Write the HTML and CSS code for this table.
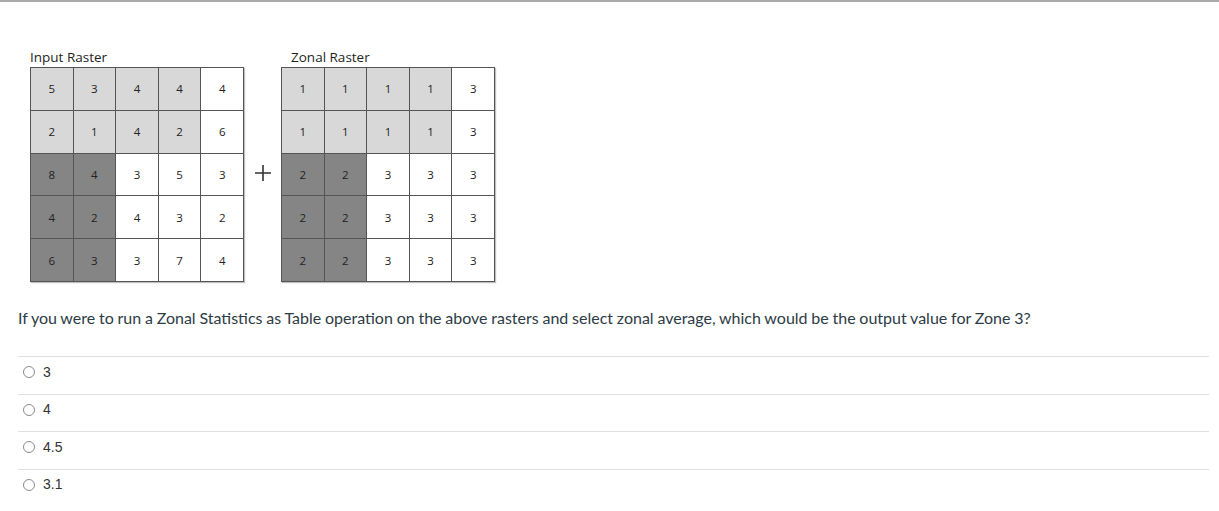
FILE: index.html
```html
<!DOCTYPE html>
<html>
<head>
<meta charset="utf-8">
<link rel="stylesheet" href="styles.css">
</head>
<body>
<div class="topline"></div>
<div class="figure">
  <div class="raster">
    <div class="label">Input Raster</div>
    <div class="grid">
      <div class="c l">5</div><div class="c l">3</div><div class="c l">4</div><div class="c l">4</div><div class="c">4</div>
      <div class="c l">2</div><div class="c l">1</div><div class="c l">4</div><div class="c l">2</div><div class="c">6</div>
      <div class="c d">8</div><div class="c d">4</div><div class="c">3</div><div class="c">5</div><div class="c">3</div>
      <div class="c d">4</div><div class="c d">2</div><div class="c">4</div><div class="c">3</div><div class="c">2</div>
      <div class="c d">6</div><div class="c d">3</div><div class="c">3</div><div class="c">7</div><div class="c">4</div>
    </div>
  </div>
  <div class="plus">
    <svg width="16" height="16" viewBox="0 0 16 16"><path d="M8 0V16M0 8H16" stroke="#333" stroke-width="1.6" fill="none"/></svg>
  </div>
  <div class="raster">
    <div class="label indent">Zonal Raster</div>
    <div class="grid">
      <div class="c l">1</div><div class="c l">1</div><div class="c l">1</div><div class="c l">1</div><div class="c">3</div>
      <div class="c l">1</div><div class="c l">1</div><div class="c l">1</div><div class="c l">1</div><div class="c">3</div>
      <div class="c d">2</div><div class="c d">2</div><div class="c">3</div><div class="c">3</div><div class="c">3</div>
      <div class="c d">2</div><div class="c d">2</div><div class="c">3</div><div class="c">3</div><div class="c">3</div>
      <div class="c d">2</div><div class="c d">2</div><div class="c">3</div><div class="c">3</div><div class="c">3</div>
    </div>
  </div>
</div>
<p class="question">If you were to run a Zonal Statistics as Table operation on the above rasters and select zonal average, which would be the output value for Zone 3?</p>
<div class="answers">
  <label class="answer"><span class="radio"></span><span class="atext">3</span></label>
  <label class="answer"><span class="radio"></span><span class="atext">4</span></label>
  <label class="answer"><span class="radio"></span><span class="atext">4.5</span></label>
  <label class="answer"><span class="radio"></span><span class="atext">3.1</span></label>
</div>
</body>
</html>
```

FILE: styles.css
```css
html, body {
  margin: 0;
  padding: 0;
  background: #fff;
}
.topline {
  height: 2px;
  background: #a9a9a9;
}
.figure {
  display: flex;
  align-items: flex-end;
  padding: 47px 0 0 30px;
}
.label {
  font-family: "Open Sans", "Noto Sans", sans-serif;
  font-size: 13.5px;
  line-height: 16px;
  color: #231f20;
  margin-bottom: 2px;
}
.label.indent {
  padding-left: 10px;
}
.grid {
  display: grid;
  grid-template-columns: repeat(5, 1fr);
  grid-template-rows: repeat(5, 1fr);
  gap: 1px;
  padding: 1px;
  width: 214px;
  height: 215px;
  box-sizing: border-box;
  background: #555;
  box-shadow: 1px 1px 1px rgba(0,0,0,0.25);
}
.c {
  background: #fff;
  display: flex;
  align-items: center;
  justify-content: center;
  font-family: "Open Sans", "Noto Sans", sans-serif;
  font-size: 11.5px;
  color: #222;
}
.c.l { background: #d8d8d8; }
.c.d { background: #858585; }
.plus {
  width: 37px;
  height: 215px;
  display: flex;
  align-items: center;
  justify-content: center;
  padding-bottom: 3px;
  box-sizing: border-box;
}
.plus svg { display: block; }
.question {
  margin: 26px 0 0 18px;
  font-family: Lato, sans-serif;
  font-size: 16px;
  line-height: 20px;
  word-spacing: -0.33px;
  color: #2d3b45;
}
.answers {
  margin: 28px 10px 0 18px;
}
.answer {
  display: flex;
  align-items: center;
  border-top: 1px solid #e0e0e0;
  padding: 4.5px 0 12px 5px;
  height: 20px;
  font-family: "Liberation Sans", Arial, sans-serif;
  font-size: 14px;
  color: #333;
}
.radio {
  width: 10px;
  height: 10px;
  border: 1px solid #8a8a8a;
  border-radius: 50%;
  margin-right: 8px;
  margin-top: 1px;
}
```
